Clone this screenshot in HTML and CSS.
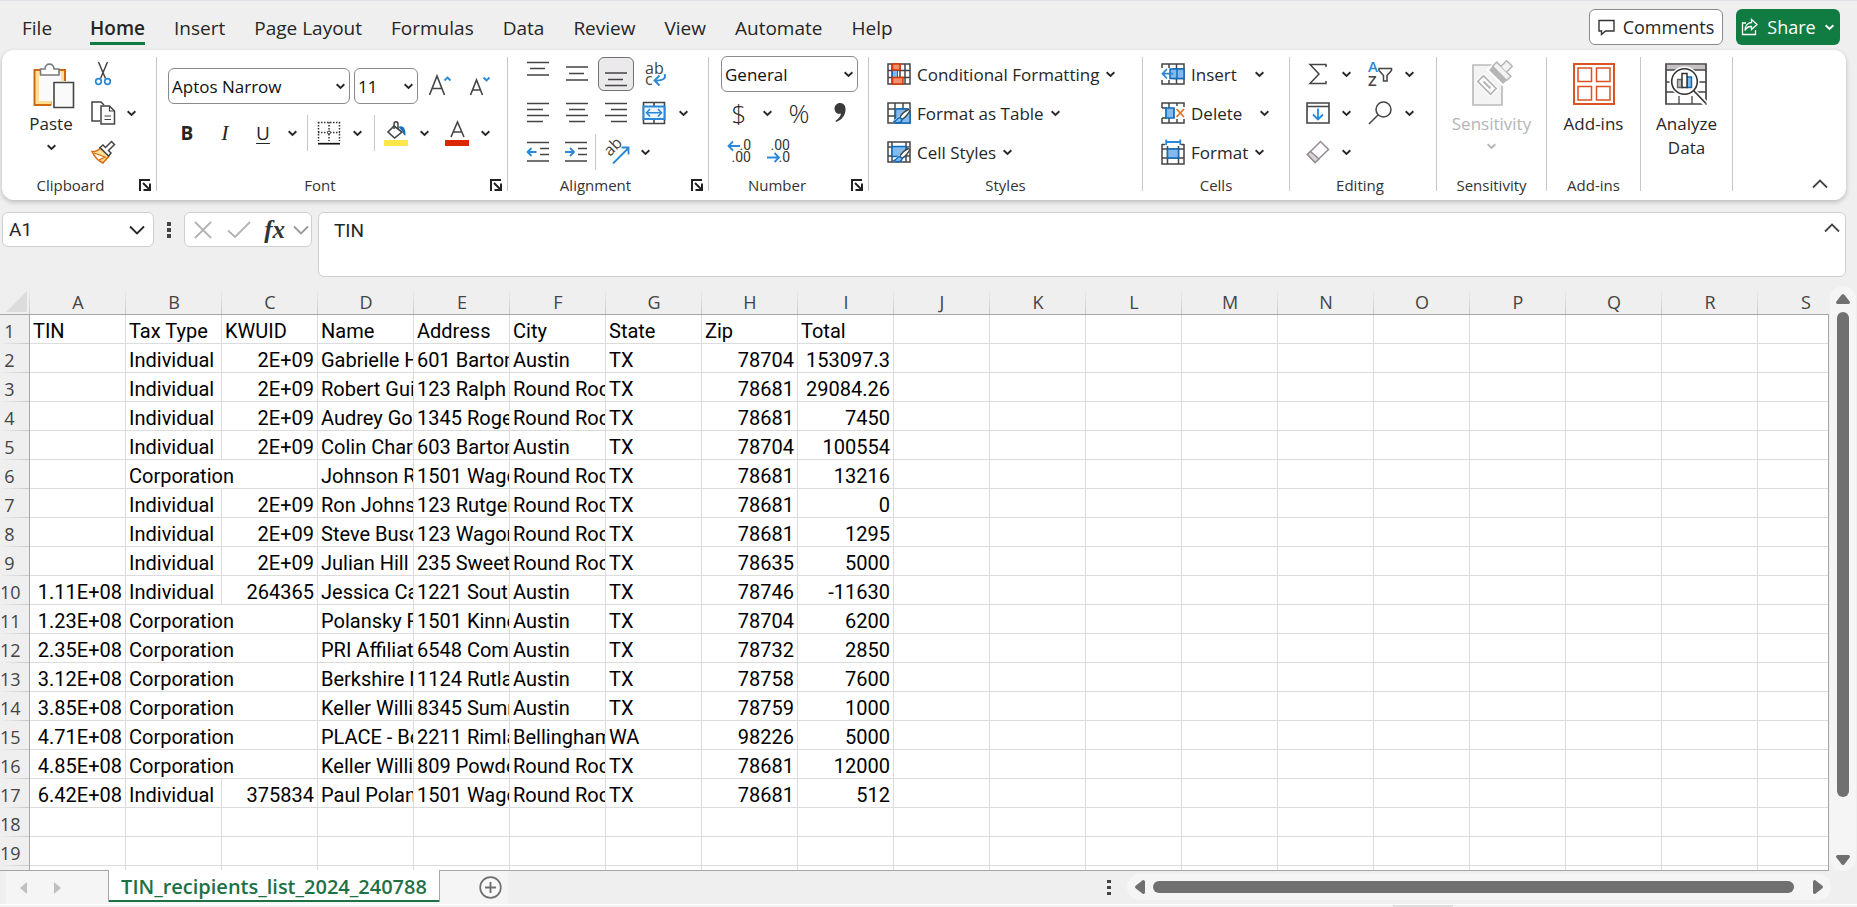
FILE: index.html
```html
<!DOCTYPE html>
<html lang="en">
<head>
<meta charset="utf-8">
<title>TIN_recipients_list_2024_240788</title>
<link rel="stylesheet" href="styles.css">
</head>
<body>
<svg class="defs" aria-hidden="true">
  <symbol id="chev" viewBox="0 0 10 10"><path d="M1.5 3 L5 6.300 L8.500 3" fill="none" stroke="currentColor" stroke-width="1.700"/></symbol>
  <symbol id="chev-l" viewBox="0 0 16 10"><path d="M1 1.500 L8 8.500 L15 1.500" fill="none" stroke="currentColor" stroke-width="1.8"/></symbol>
  <symbol id="launch" viewBox="0 0 12 12"><path d="M1 12 V1 H11 M4 4 L10 10 M11 4.500 V11 H4.500" fill="none" stroke="#222" stroke-width="2"/></symbol>
  <symbol id="brush" viewBox="0 0 18 16">
    <path d="M4 10 L16 0 L18 2 L11 10 L8 14 L3 15 L0 13 Z" fill="#fff"/>
    <path d="M16.500 1 C12 3 8 7 7 9.500 L9 11.500 C12 10 16 5 17.500 1.500" fill="#fff" stroke="#444" stroke-width="1.4"/>
    <path d="M7 9.500 C4.500 9.500 4.500 12 1 13.500 C4 15.500 9 15 9 11.500 Z" fill="#83b9eb" stroke="#0f6cbd" stroke-width="1.4"/>
  </symbol>
</svg>

<header class="top">
  <nav class="tabs" aria-label="Ribbon tabs">
    <button class="tab">File</button>
    <button class="tab active">Home</button>
    <button class="tab">Insert</button>
    <button class="tab">Page Layout</button>
    <button class="tab">Formulas</button>
    <button class="tab">Data</button>
    <button class="tab">Review</button>
    <button class="tab">View</button>
    <button class="tab">Automate</button>
    <button class="tab">Help</button>
  </nav>
  <div class="actions">
    <button class="comments">
      <svg width="17" height="17" viewBox="0 0 17 17"><path d="M1 1.500 H16 V12 H7.500 L3.500 15.500 V12 H1 Z" fill="none" stroke="#333" stroke-width="1.4"/></svg>
      Comments
    </button>
    <button class="share">
      <svg width="18" height="18" viewBox="0 0 18 18"><path d="M5 5 H1.500 V16.500 H14.500 V12 M10.500 1.500 L16 6.500 L10.500 11.500 V8.500 C7.500 8.300 5.500 9.500 4 12.500 C4 7.500 7 4.700 10.500 4.500 Z" fill="none" stroke="#fff" stroke-width="1.3"/></svg>
      Share
      <svg class="c10"><use href="#chev"/></svg>
    </button>
  </div>
</header>

<section class="ribbon" aria-label="Home ribbon">
  <div class="group g-clipboard">
    <div class="body cols">
      <button class="tall paste">
        <svg width="42" height="46" viewBox="0 0 42 46">
          <path d="M1.500 7 H32 V20 H19 V42 H1.500 Z" fill="#ffdf91" stroke="#d06a10" stroke-width="2"/>
          <path d="M6 10 H28 V18 H19 V38 H6 Z" fill="#fafafa"/>
          <path d="M7.500 12 V6 H12 C12 -0.500 21 -0.500 21 6 H26 V12 Z" fill="#fff" stroke="#7a7a7a" stroke-width="1.6"/>
          <path d="M18.500 18 H42 V46 H18.500 Z" fill="#fff"/>
          <path d="M21 19.500 H40.500 V44.500 H21 Z" fill="#fafafa" stroke="#444" stroke-width="1.6"/>
        </svg>
        <span>Paste</span>
        <svg class="c10"><use href="#chev"/></svg>
      </button>
      <div class="rows">
        <div class="row">
          <button class="b42" aria-label="Cut"><svg width="18" height="26" viewBox="0 0 18 26"><path d="M4.500 1 L11.500 17.500 M13.500 1 L6.500 17.500" stroke="#444" stroke-width="1.5" fill="none"/><g fill="#fff" stroke="#2b88d8" stroke-width="1.7"><circle cx="4.500" cy="20.500" r="2.800"/><circle cx="13.500" cy="20.500" r="2.800"/></g></svg></button>
        </div>
        <div class="row">
          <button class="b42" aria-label="Copy"><svg width="25" height="24" viewBox="0 0 25 24"><path d="M9 20 H1 V1 H10 L13 4" fill="none" stroke="#444" stroke-width="1.5"/><path d="M10 5 H18.500 L23.500 10 V23 H10 Z" fill="#fafafa" stroke="#444" stroke-width="1.500"/><path d="M18.500 5 V10 H23.500 M13.500 15 H20 M13.500 18.500 H20" fill="none" stroke="#444" stroke-width="1.2"/></svg></button>
          <button class="b14" aria-label="Copy options"><svg class="c10"><use href="#chev"/></svg></button>
        </div>
        <div class="row">
          <button class="b42" aria-label="Format Painter"><svg width="25" height="24" viewBox="0 0 25 24"><path d="M1 11.500 C5 11.500 8 10 9 8 L18 16 C16 19 13.500 20.500 12 23 C7.500 21 3 16 1 11.500 Z" fill="#ffdf91" stroke="#d8680c" stroke-width="1.5"/><path d="M3 13 L14 17 L8 20" fill="#fff" stroke="#d8680c" stroke-width="1.300"/><path d="M9 7.500 L12 5 L14.500 7.500 L20.500 1.500 L23.500 4.500 L17.500 10.500 L20 13 L17.500 16 Z" fill="#fff" stroke="#444" stroke-width="1.500"/></svg></button>
        </div>
      </div>
    </div>
    <div class="label"><span>Clipboard</span><button aria-label="Clipboard settings"><svg><use href="#launch"/></svg></button></div>
  </div>

  <div class="group g-font">
    <div class="body rows">
      <div class="row">
        <label class="pick font-name"><select aria-label="Font"><option>Aptos Narrow</option></select><svg class="c10"><use href="#chev"/></svg></label>
        <label class="pick font-size"><select aria-label="Font size"><option>11</option></select><svg class="c10"><use href="#chev"/></svg></label>
        <button class="b44" aria-label="Increase font size"><svg width="24" height="24" viewBox="0 0 24 24"><path d="M1.500 21 L9 2 L16.500 21 M4 14.500 H14" fill="none" stroke="#444" stroke-width="1.600"/><path d="M16.500 6.500 L19.500 3.500 L22.500 6.500" fill="none" stroke="#2b88d8" stroke-width="1.800"/></svg></button>
        <button class="b36" aria-label="Decrease font size"><svg width="22" height="24" viewBox="0 0 22 24"><path d="M1.500 21 L7.500 6 L13.500 21 M3.500 16 H11.500" fill="none" stroke="#444" stroke-width="1.600"/><path d="M14.500 3.500 L17.500 6.500 L20.500 3.500" fill="none" stroke="#2b88d8" stroke-width="1.800"/></svg></button>
      </div>
      <div class="row">
        <button class="b38 bold">B</button>
        <button class="b38 italic">I</button>
        <button class="b38 under">U</button>
        <button class="b20" aria-label="Underline options"><svg class="c10"><use href="#chev"/></svg></button>
        <i class="sep"></i>
        <button class="b32" aria-label="Borders"><svg width="24" height="24" viewBox="0 0 24 24"><path d="M1 1.500 H23 M1 11.500 H23" fill="none" stroke="#333" stroke-width="1.500" stroke-dasharray="1.500 1.500"/><path d="M1.500 1 V20 M12 1 V20 M22.500 1 V20" fill="none" stroke="#333" stroke-width="1.500" stroke-dasharray="1.500 1.500"/><circle cx="12" cy="11.500" r="1.500" fill="#fff" stroke="#333"/><path d="M1 22.700 H23" stroke="#111" stroke-width="1.700"/></svg></button>
        <button class="b24" aria-label="Border options"><svg class="c10"><use href="#chev"/></svg></button>
        <i class="sep"></i>
        <button class="b32" aria-label="Fill color"><svg width="24" height="26" viewBox="0 0 24 26"><path d="M10 6 L18 12 L10.500 18 L4 12 Z" fill="#fff" stroke="#444" stroke-width="1.600"/><path d="M10 9 V4 C10 1 14 1 14 4 V9" fill="none" stroke="#444" stroke-width="1.500"/><path d="M14.500 7 C18 5 22 7 21.500 15.500 C19 15 19 12.500 18.500 11.500 Z" fill="#1a6fbf"/><path d="M0 20 H24 V26 H0 Z" fill="#ffe74a"/></svg></button>
        <button class="b24" aria-label="Fill options"><svg class="c10"><use href="#chev"/></svg></button>
        <button class="b42" aria-label="Font color"><svg width="24" height="26" viewBox="0 0 24 26"><path d="M6 17 L12.500 2 L19 17 M8.300 12 H16.700" fill="none" stroke="#444" stroke-width="1.600"/><path d="M0 20 H24 V26 H0 Z" fill="#dc2600"/></svg></button>
        <button class="b14" aria-label="Font color options"><svg class="c10"><use href="#chev"/></svg></button>
      </div>
    </div>
    <div class="label"><span>Font</span><button aria-label="Font settings"><svg><use href="#launch"/></svg></button></div>
  </div>

  <div class="group g-align">
    <div class="body rows">
      <div class="row">
        <button class="b39" aria-label="Top align"><svg class="i24"><path d="M1 0.500 H23 M4 6.500 H19 M1 13 H23" class="ln"/></svg></button>
        <button class="b39" aria-label="Middle align"><svg class="i24"><path d="M1 5 H23 M4 11.500 H19 M1 18 H23" class="ln"/></svg></button>
        <button class="b39 on" aria-label="Bottom align"><svg class="i24"><path d="M1 11 H23 M4 17.500 H19 M1 23.500 H23" class="ln"/></svg></button>
        <button class="b42" aria-label="Wrap text"><svg width="22" height="26" viewBox="0 0 22 26"><text x="0" y="13" class="glyph">ab</text><text x="0" y="24" class="glyph">c</text><path d="M19.500 13 C21.500 18 17 20 10 19.500 M14.500 14.500 L9.500 19.500 L14.500 24.500" fill="none" stroke="#2b88d8" stroke-width="1.900"/></svg></button>
      </div>
      <div class="row">
        <button class="b39" aria-label="Align left"><svg class="i24"><path d="M1 2.500 H23 M1 8.500 H17 M1 14.500 H23 M1 20.500 H17" class="ln"/></svg></button>
        <button class="b39" aria-label="Center"><svg class="i24"><path d="M1 2.500 H23 M4 8.500 H20 M1 14.500 H23 M4 20.500 H20" class="ln"/></svg></button>
        <button class="b39" aria-label="Align right"><svg class="i24"><path d="M1 2.500 H23 M7 8.500 H23 M1 14.500 H23 M7 20.500 H23" class="ln"/></svg></button>
        <button class="b38" aria-label="Merge and center"><svg class="i24"><path d="M1.500 1.500 H22.500 V22.500 H1.500 Z M12 1.500 V22.500" fill="#fff" stroke="#444" stroke-width="1.600"/><path d="M1.500 5.500 H22.500 V18 H1.500 Z" fill="#eef6fd" stroke="#2b88d8" stroke-width="2"/><path d="M4.500 11.700 H19.500 M8 8 L4.500 11.700 L8 15.500 M16 8 L19.500 11.700 L16 15.500" fill="none" stroke="#2b88d8" stroke-width="1.600"/></svg></button>
        <button class="b20" aria-label="Merge options"><svg class="c10"><use href="#chev"/></svg></button>
      </div>
      <div class="row">
        <button class="b39" aria-label="Decrease indent"><svg class="i24"><path d="M1 2.500 H23 M14 8.500 H23 M14 14.500 H23 M1 21 H23" class="ln"/><path d="M1.500 12 H10.500 M5.500 8 L1.500 12 L5.500 16" class="bl"/></svg></button>
        <button class="b38" aria-label="Increase indent"><svg class="i24"><path d="M1 2.500 H23 M14 8.500 H23 M14 14.500 H23 M1 21 H23" class="ln"/><path d="M1 12 H10 M6 8 L10 12 L6 16" class="bl"/></svg></button>
        <i class="sep tight"></i>
        <button class="b42" aria-label="Orientation"><svg width="26" height="26" viewBox="0 0 26 26"><text x="0" y="0" class="glyph" transform="translate(6 18) rotate(-45)">ab</text><path d="M9 24.500 L24 9.500 M17.500 8.500 H24.500 V15.500" fill="none" stroke="#2b88d8" stroke-width="1.800"/></svg></button>
        <button class="b14" aria-label="Orientation options"><svg class="c10"><use href="#chev"/></svg></button>
      </div>
    </div>
    <div class="label"><span>Alignment</span><button aria-label="Alignment settings"><svg><use href="#launch"/></svg></button></div>
  </div>

  <div class="group g-number">
    <div class="body rows">
      <div class="row">
        <label class="pick num-format"><select aria-label="Number format"><option>General</option></select><svg class="c10"><use href="#chev"/></svg></label>
      </div>
      <div class="row">
        <button class="b36 big">$</button>
        <button class="b20" aria-label="Currency options"><svg class="c10"><use href="#chev"/></svg></button>
        <button class="b44 big">%</button>
        <button class="b38" aria-label="Comma style"><svg width="14" height="22" viewBox="0 0 14 22"><path d="M7 1 C11 1 13 4 12.500 8.500 C12 14 8 18.500 3 20 L2.500 18.800 C5.500 17 7.500 14.500 8 11.500 C4.500 12.800 1.500 10 1.500 6.500 C1.500 3.500 4 1 7 1 Z" fill="#3a3a3a"/></svg></button>
      </div>
      <div class="row">
        <button class="b36" aria-label="Increase decimal"><svg width="24" height="26" viewBox="0 0 24 26"><text x="24" y="11" class="digits">.0</text><text x="24" y="23" class="digits">.00</text><path d="M1.500 7 H13 M6 2.500 L1.500 7 L6 11.500" class="bl"/></svg></button>
        <button class="b42" aria-label="Decrease decimal"><svg width="24" height="26" viewBox="0 0 24 26"><text x="24" y="11" class="digits">.00</text><text x="24" y="23" class="digits">.0</text><path d="M1 18.500 H13 M8.500 14 L13 18.500 L8.500 23" class="bl"/></svg></button>
      </div>
    </div>
    <div class="label"><span>Number</span><button aria-label="Number settings"><svg><use href="#launch"/></svg></button></div>
  </div>

  <div class="group g-styles">
    <div class="body rows">
      <div class="row"><button class="cmd">
        <svg width="24" height="22" viewBox="0 0 24 22"><path d="M1 1 H23 V21 H1 Z M1 7.500 H23 M1 14.500 H23 M5 1 V21 M18 1 V21 M13 1 V21" fill="#fff" stroke="#444" stroke-width="1.500"/><path d="M5.500 7.500 H10.500 V14.500 H5.500 Z" fill="#83b9eb" stroke="#0f6cbd" stroke-width="1"/><path d="M5.500 1 H13 V7 H5.500 Z M5.500 14.500 H16 V21 H5.500 Z" fill="#f09070" stroke="#d83b01" stroke-width="1.500"/></svg>
        Conditional Formatting<svg class="c10"><use href="#chev"/></svg></button></div>
      <div class="row"><button class="cmd">
        <svg width="24" height="22" viewBox="0 0 24 22"><path d="M1 1 H23 V21 H1 Z M1 7 H23 M1 14 H23 M8 1 V21 M16 1 V21" fill="#fff" stroke="#444" stroke-width="1.500"/><path d="M8.500 7 H23 V21 H8.500 Z" fill="#83b9eb" stroke="#0f6cbd" stroke-width="1.500"/><use href="#brush" x="6" y="6" width="18" height="16"/></svg>
        Format as Table<svg class="c10"><use href="#chev"/></svg></button></div>
      <div class="row"><button class="cmd">
        <svg width="24" height="22" viewBox="0 0 24 22"><path d="M1 1 H23 V21 H1 Z M1 6 H23 M1 15 H23 M5 1 V21 M19 1 V21" fill="#fff" stroke="#444" stroke-width="1.500"/><path d="M5 5.500 H19 V15.500 H5 Z" fill="#83b9eb" stroke="#0f6cbd" stroke-width="1.500"/><use href="#brush" x="6" y="6" width="18" height="16"/></svg>
        Cell Styles<svg class="c10"><use href="#chev"/></svg></button></div>
    </div>
    <div class="label"><span>Styles</span></div>
  </div>

  <div class="group g-cells">
    <div class="body rows">
      <div class="row"><button class="cmd split">
        <svg width="24" height="22" viewBox="0 0 24 22"><path d="M1 1 H23 V21 H1 Z M1 6 H23 M1 15.500 H23 M8 1 V21 M15.500 1 V21" fill="#fff" stroke="#444" stroke-width="1.500"/><path d="M0 5 H12 V17 H0 Z" fill="#fff"/><path d="M9 6 H23 V15.500 H9 Z" fill="#83b9eb" stroke="#0f6cbd" stroke-width="1.500"/><path d="M16 6 V15" stroke="#0f6cbd" stroke-width="1.500"/><path d="M1.500 10.700 H12 M6 6 L1.500 10.700 L6 15.500" class="bl"/></svg>
        Insert<svg class="c10"><use href="#chev"/></svg></button></div>
      <div class="row"><button class="cmd split">
        <svg width="24" height="22" viewBox="0 0 24 22"><path d="M1 6 V1 H23 V5 M1 16 V21 H23 V17 M1 6 H6 M1 16 H6 M8 1 V6 M16 1 V4 M8 16 V21 M16 17 V21" fill="none" stroke="#444" stroke-width="1.500"/><path d="M5 6 H13 V16 H5 Z" fill="#83b9eb" stroke="#0f6cbd" stroke-width="1.700"/><path d="M15.500 7 L23 15 M23 7 L15.500 15" stroke="#e07020" stroke-width="1.700"/></svg>
        Delete<svg class="c10"><use href="#chev"/></svg></button></div>
      <div class="row"><button class="cmd">
        <svg width="24" height="26" viewBox="0 0 24 26"><path d="M1 5 V25 H23 V5 M1 10 H23 M1 19 H23 M6.500 7 V25 M17.500 7 V25 M1 5.500 H4 M20 5.500 H23" fill="none" stroke="#444" stroke-width="1.500"/><path d="M6.500 10 H17.500 V19 H6.500 Z" fill="#83b9eb" stroke="#0f6cbd" stroke-width="1.500"/><path d="M5 3 H19.500 M5.200 0.500 V6 M19.300 0.500 V6" class="bl"/></svg>
        Format<svg class="c10"><use href="#chev"/></svg></button></div>
    </div>
    <div class="label"><span>Cells</span></div>
  </div>

  <div class="group g-editing">
    <div class="body rows">
      <div class="row">
        <button class="b32" aria-label="AutoSum"><svg width="20" height="22" viewBox="0 0 20 22"><path d="M18 4 V1.500 H2 L11 11 L2 20.500 H18 V18" fill="none" stroke="#444" stroke-width="1.500"/></svg></button>
        <button class="b24" aria-label="AutoSum options"><svg class="c10"><use href="#chev"/></svg></button>
        <button class="b44" aria-label="Sort and filter"><svg width="26" height="26" viewBox="0 0 26 26"><text x="1" y="11" class="az a">A</text><text x="1" y="25" class="az">Z</text><path d="M12 7.500 H24.500 V9.500 L20 14.500 V20 H16.500 V14.500 L12 9.500 Z" fill="none" stroke="#444" stroke-width="1.500"/></svg></button>
        <button class="b14" aria-label="Sort options"><svg class="c10"><use href="#chev"/></svg></button>
      </div>
      <div class="row">
        <button class="b32" aria-label="Fill"><svg width="24" height="22" viewBox="0 0 24 22"><path d="M1 1 H23 V21 H1 Z M1 4.500 H23" fill="#fff" stroke="#444" stroke-width="1.600"/><path d="M12 6.500 V17 M7 12.500 L12 17.500 L17 12.500" class="bl"/></svg></button>
        <button class="b24" aria-label="Fill options"><svg class="c10"><use href="#chev"/></svg></button>
        <button class="b44" aria-label="Find and select"><svg width="24" height="24" viewBox="0 0 24 24"><circle cx="15.500" cy="8.500" r="7.500" fill="#fff" stroke="#444" stroke-width="1.500"/><path d="M10.200 13.800 L1 23" stroke="#444" stroke-width="1.500"/></svg></button>
        <button class="b14" aria-label="Find options"><svg class="c10"><use href="#chev"/></svg></button>
      </div>
      <div class="row">
        <button class="b32" aria-label="Clear"><svg width="24" height="24" viewBox="0 0 24 24"><path d="M1.500 14.500 L14.500 1.500 L22.500 9.500 L9 22.500 Z" fill="#fff" stroke="#968a96" stroke-width="1.500"/><path d="M1.500 14.500 L4.500 11.500 L13 19 L9 22.500 Z" fill="#d8d4d8" stroke="#968a96" stroke-width="1.400"/></svg></button>
        <button class="b24" aria-label="Clear options"><svg class="c10"><use href="#chev"/></svg></button>
      </div>
    </div>
    <div class="label"><span>Editing</span></div>
  </div>

  <div class="group g-sens">
    <div class="body cols center">
      <button class="tall off" disabled>
        <svg width="42" height="46" viewBox="0 0 42 46"><path d="M2 5 H31 V45 H2 Z" fill="#f3f3f3" stroke="#bbb" stroke-width="1.700"/>
          <g transform="rotate(45 16 25)"><path d="M5 19 H27 V31 H5 Z" fill="#fff"/><path d="M7 21 H25 V29 H7 Z" fill="#fff" stroke="#b5b5b5" stroke-width="1.700"/><path d="M11 25 H21" stroke="#b5b5b5" stroke-width="2.200"/></g>
          <g transform="rotate(45 30 12)"><path d="M18 5 H42 V21 H18 Z" fill="#fff"/><path d="M20 13 H40 V19 H20 Z" fill="#b5b5b5"/><path d="M20 8 H40 V14 H20 Z" fill="#f3f3f3" stroke="#b5b5b5" stroke-width="1.500"/><path d="M26 8 V0 H34 V8" fill="#f3f3f3" stroke="#b5b5b5" stroke-width="1.500"/></g></svg>
        <span>Sensitivity</span>
        <svg class="c10"><use href="#chev"/></svg>
      </button>
    </div>
    <div class="label"><span>Sensitivity</span></div>
  </div>

  <div class="group g-addins">
    <div class="body cols center">
      <button class="tall">
        <svg width="42" height="46" viewBox="0 0 42 46"><path d="M1 4 H41 V44 H1 Z" fill="#fff" stroke="#dd5222" stroke-width="2"/><path d="M5 8 H18.500 V21.500 H5 Z M23.500 8 H37 V21.500 H23.500 Z M5 26.500 H18.500 V40 H5 Z M23.500 26.500 H37 V40 H23.500 Z" fill="#fff" stroke="#dd5222" stroke-width="1.500"/></svg>
        <span>Add-ins</span>
      </button>
    </div>
    <div class="label"><span>Add-ins</span></div>
  </div>

  <div class="group g-analyze">
    <div class="body cols center">
      <button class="tall">
        <svg width="42" height="46" viewBox="0 0 42 46"><path d="M1 4 H41 V44 H1 Z" fill="#fff" stroke="#444" stroke-width="1.700"/><path d="M2 5 H40 V9.500 H2 Z" fill="#c8c2c8"/><path d="M1 10 H41 M1 22 H6 M34 22 H41 M1 32 H41 M14 36 V44 M27 36 V44" stroke="#444" stroke-width="1.300"/><circle cx="19.500" cy="21.500" r="15" fill="#fff"/><path d="M27 30 L41 44" stroke="#fff" stroke-width="6"/><circle cx="19.500" cy="21.500" r="12.800" fill="#fff" stroke="#333" stroke-width="1.600"/><path d="M28.500 30.500 L41 43.500" stroke="#333" stroke-width="1.700"/><path d="M12.500 19.500 H17 V27.500 H12.500 Z" fill="#bbb" stroke="#666" stroke-width="1.300"/><path d="M22 17 H26.500 V27.500 H22 Z" fill="#83b9eb" stroke="#0f6cbd" stroke-width="1.500"/><path d="M17 13.500 H22 V27.500 H17 Z" fill="#fff" stroke="#333" stroke-width="1.500"/></svg>
        <span>Analyze<br>Data</span>
      </button>
    </div>
  </div>
  <button class="collapse" aria-label="Collapse ribbon"><svg class="up"><use href="#chev-l"/></svg></button>
</section>

<section class="formula" aria-label="Formula bar">
  <div class="box name"><input type="text" value="A1" aria-label="Name box"><svg class="big-chev"><use href="#chev-l"/></svg></div>
  <svg class="vdots" viewBox="0 0 4 16"><path d="M0 0 H4 V4 H0 Z M0 6 H4 V10 H0 Z M0 12 H4 V16 H0 Z" fill="#444"/></svg>
  <div class="box fx">
    <button aria-label="Cancel"><svg width="18" height="18" viewBox="0 0 18 18"><path d="M1 1 L17 17 M17 1 L1 17" stroke="#b3b3b3" stroke-width="1.800"/></svg></button>
    <button class="enter" aria-label="Enter"><svg width="24" height="18" viewBox="0 0 24 18"><path d="M1 9.500 L8 16 L23 1" fill="none" stroke="#b3b3b3" stroke-width="1.800"/></svg></button>
    <button class="fn" aria-label="Insert function">fx</button>
    <button class="grey" aria-label="Function options"><svg class="big-chev"><use href="#chev-l"/></svg></button>
  </div>
  <div class="box entry"><textarea aria-label="Formula">TIN</textarea><button aria-label="Collapse formula bar"><svg class="up"><use href="#chev-l"/></svg></button></div>
</section>

<main class="work">
  <div class="sheet"><table id="grid"></table></div>
  <div class="vbar" aria-hidden="true">
    <svg width="14" height="10" viewBox="0 0 14 10"><path d="M7 0 Q8 0 9 1.500 L14 8 Q14 10 12.500 10 H1.500 Q0 10 0 8 L5 1.500 Q6 0 7 0 Z" fill="#707070"/></svg>
    <i class="vthumb"></i>
    <svg width="14" height="10" viewBox="0 0 14 10"><path d="M7 10 Q8 10 9 8.500 L14 2 Q14 0 12.500 0 H1.500 Q0 0 0 2 L5 8.500 Q6 10 7 10 Z" fill="#707070"/></svg>
  </div>
</main>

<footer class="foot">
  <div class="sheets">
    <button class="arrow" aria-label="Previous sheet"><svg width="7" height="12" viewBox="0 0 7 12"><path d="M7 0 V12 L0 6 Z" fill="#c2bec2"/></svg></button>
    <button class="arrow" aria-label="Next sheet"><svg width="7" height="12" viewBox="0 0 7 12"><path d="M0 0 V12 L7 6 Z" fill="#c2bec2"/></svg></button>
    <button class="sheet-tab">TIN_recipients_list_2024_240788</button>
    <button class="add" aria-label="New sheet"><svg width="23" height="23" viewBox="0 0 23 23"><circle cx="11.500" cy="11.500" r="10.300" fill="#fafafa" stroke="#707070" stroke-width="1.700"/><path d="M6 11.500 H17 M11.500 6 V17" stroke="#707070" stroke-width="1.900"/></svg></button>
  </div>
  <svg class="vdots" viewBox="0 0 4 16"><path d="M0 0 H4 V3 H0 Z M0 6 H4 V9 H0 Z M0 12 H4 V15 H0 Z" fill="#444"/></svg>
  <div class="hbar" aria-hidden="true">
    <svg width="10" height="14" viewBox="0 0 10 14"><path d="M0 7 Q0 6 1.500 5 L8 0 Q10 0 10 1.500 V12.500 Q10 14 8 14 L1.500 9 Q0 8 0 7 Z" fill="#707070"/></svg>
    <i class="hthumb"></i>
    <svg width="10" height="14" viewBox="0 0 10 14"><path d="M10 7 Q10 6 8.500 5 L2 0 Q0 0 0 1.500 V12.500 Q0 14 2 14 L8.500 9 Q10 8 10 7 Z" fill="#707070"/></svg>
  </div>
</footer>
<div class="status"><i></i></div>
<script src="sheet.js"></script>
</body>
</html>
```
FILE: styles.css
```css
* { box-sizing: border-box; }
html, body { height: 100%; }
body {
  margin: 0;
  display: flex;
  flex-direction: column;
  overflow: hidden;
  background: #efefef;
  border-top: 1px solid #dde1e6;
  color: #262626;
  font-family: "Open Sans", "Noto Sans", sans-serif;
  font-size: 17px;
}
button, input, select, textarea { font: inherit; color: inherit; background: none; border: 0; margin: 0; padding: 0; outline: 0; }
button { display: flex; align-items: center; justify-content: center; flex: none; }
svg { display: block; flex: none; overflow: visible; }
.defs { position: absolute; width: 0; height: 0; }
.c10 { width: 11px; height: 11px; }
.i24 { width: 24px; height: 24px; }
.ln { fill: none; stroke: #444; stroke-width: 1.6px; }
.bl { fill: none; stroke: #2b88d8; stroke-width: 1.8px; }
.glyph { font-size: 16px; fill: #444; }
.digits { font-family: Roboto, sans-serif; font-size: 14px; fill: #333; text-anchor: end; }
.az { font-size: 15px; font-weight: 600; fill: #444; }
.az.a { fill: #2b88d8; }

/* tab strip */
.top { height: 49px; display: flex; justify-content: space-between; flex: none; }
.tabs { display: flex; gap: 29px; padding: 12px 0 0 22px; font-size: 19px; }
.tab { height: 32px; padding-top: 1px; line-height: 30px; border-bottom: 3px solid transparent; }
.tab.active { margin-left: 9px; font-weight: 600; border-color: #107c41; }
.actions { display: flex; gap: 13px; padding: 8px 17px 0 0; font-size: 18px; }
.comments, .share { height: 36px; border-radius: 6px; gap: 8px; }
.comments { width: 134px; background: #fff; border: 1px solid #8a8a8a; }
.share { width: 104px; background: #107c41; color: #fff; }

/* ribbon */
.ribbon {
  height: 150px;
  flex: none;
  display: flex;
  margin: 0 11px 0 2px;
  padding: 7px 0 9px;
  background: #fff;
  border-radius: 12px;
  box-shadow: 0 2px 5px rgba(0, 0, 0, .22);
}
.group { display: flex; flex-direction: column; border-right: 1px solid #c8c8c8; flex: none; }
.g-clipboard { width: 155px; padding-left: 18px; }
.g-font { width: 351px; padding-left: 11px; }
.g-align { width: 201px; padding-left: 10px; }
.g-number { width: 160px; padding-left: 12px; }
.g-styles { width: 274px; padding-left: 18px; }
.g-cells { width: 147px; padding-left: 18px; }
.g-editing { width: 147px; padding-left: 12px; }
.g-sens { width: 110px; }
.g-addins { width: 94px; }
.g-analyze { width: 92px; }
.body { flex: 1; }
.cols { display: flex; align-items: flex-start; }
.center { justify-content: center; }
.rows { display: flex; flex-direction: column; gap: 5px; }
.row { display: flex; height: 34px; align-items: center; }
.row > button { height: 34px; }
.g-font .rows { padding-top: 11px; gap: 11px; }
.g-font .row { height: 36px; }
.label { display: flex; height: 12px; line-height: 12px; font-size: 15px; color: #333; }
.label span { flex: 1; text-align: center; }
.label svg { width: 12px; height: 12px; }
.label button { margin-right: 5px; }
.group .label { margin-left: -18px; }
.group.g-sens .label, .group.g-addins .label { margin-left: 0; }
.b14 { width: 14px; }
.b20 { width: 20px; }
.b24 { width: 24px; }
.b32 { width: 32px; }
.b36 { width: 36px; }
.b38 { width: 38px; }
.b39 { width: 39px; }
.b42 { width: 42px; }
.b44 { width: 44px; }
.on { background: #ebe9eb; border: 1px solid #707070; border-radius: 6px; width: 36px; margin: 0 1px 0 2px; }
.sep { width: 1px; height: 36px; margin: 0 5px; background: #c8c8c8; }
.sep.tight { margin: 0; }
.tall { flex-direction: column; padding-top: 3px; line-height: 24px; }
.tall span { padding-top: 6px; }
.tall .c10 { margin-top: 5px; }
.paste { width: 62px; }
.paste svg:first-child { margin: 3px 0 0 6px; }
.paste span { padding-top: 3px; }
.paste .c10 { margin-top: 6px; }
.off { color: #b5b5b5; }
.bold { font-weight: 700; font-size: 19px; }
.italic { font-family: "Liberation Serif", serif; font-style: italic; font-size: 22px; }
.under { text-decoration: underline; text-underline-offset: 3px; font-size: 19px; }
.big { font-size: 26px; font-weight: 300; }
.pick { position: relative; height: 36px; border: 1px solid #8a8a8a; border-radius: 6px; }
.pick select { width: 100%; height: 100%; padding-left: 3px; appearance: none; color: #111; }
.pick .c10 { position: absolute; right: 3px; top: 12px; }
.font-name { width: 182px; margin-right: 4px; }
.font-size { width: 64px; }
.num-format { width: 137px; }
.cmd { gap: 6px; }
.split .c10 { margin-left: 11px; }
.collapse { margin: auto 18px 0 auto; height: 14px; }
.up { width: 16px; height: 10px; transform: rotate(180deg); color: #444; }

/* formula bar */
.formula { display: flex; align-items: flex-start; padding: 12px 11px 9px 2px; flex: none; }
.box { display: flex; height: 35px; background: #fff; border: 1px solid #cfcfcf; border-radius: 6px; }
.big-chev { width: 16px; height: 10px; }
.name { width: 152px; align-items: center; padding: 0 8px 0 6px; }
.name input { flex: 1; min-width: 0; font-family: Roboto, sans-serif; font-size: 19px; }
.vdots { width: 4px; height: 16px; }
.formula .vdots { margin: 10px 13px 0; }
.fx { width: 128px; align-items: center; padding: 0 2px 0 9px; }
.enter { margin-left: 15px; }
.fn { margin: 0 8px 0 auto; font-family: "Liberation Serif", serif; font-style: italic; font-weight: 700; font-size: 25px; color: #333; }
.grey { color: #999; }
.entry { flex: 1; height: 65px; margin-left: 6px; align-items: flex-start; padding: 4px 5px 0 15px; }
.entry textarea { flex: 1; height: 56px; resize: none; font-family: Roboto, sans-serif; font-size: 19px; line-height: 28px; }
.entry button { padding-top: 6px; }

/* worksheet */
.work { flex: 1; min-height: 0; display: flex; }
.sheet { flex: 1; min-width: 0; position: relative; overflow: hidden; padding-top: 2px; border-bottom: 1px solid #a6a6a6; }
.sheet::after { content: ""; position: absolute; top: 28px; right: 0; bottom: 0; border-right: 1px solid #a6a6a6; }
#grid { table-layout: fixed; border-collapse: separate; border-spacing: 0; }
#grid .rowcol { width: 30px; }
#grid .datacol { width: 96px; }
#grid th { padding: 0; font-weight: 400; font-size: 18px; color: #444; }
#grid thead th {
  height: 27px;
  padding-top: 2px;
  line-height: 24px;
  border-bottom: 1px solid #a6a6a6;
  background: linear-gradient(to top, #c8c8c8, #efefef) right / 1px 100% no-repeat;
}
#grid thead th:first-child { padding-top: 0; }
#grid tbody th {
  padding: 2px 10px 0 0;
  line-height: 26px;
  border-right: 1px solid #a6a6a6;
  background: linear-gradient(to right, #efefef, #c8c8c8) bottom / 100% 1px no-repeat;
}
#grid td {
  height: 29px;
  padding: 4px 3px 0 3px;
  line-height: 24px;
  font-family: Roboto, sans-serif;
  font-size: 20px;
  color: #000;
  background: #fff;
  border-right: 1px solid #dcdcdc;
  border-bottom: 1px solid #dcdcdc;
  white-space: nowrap;
  overflow: hidden;
}
#grid .num { text-align: right; }
.corner { display: block; margin: 2px 3px 2px auto; width: 21px; height: 21px; }
.vbar {
  width: 26px;
  margin: 0 1px 0 1px;
  padding: 8px 0 6px;
  display: flex;
  flex-direction: column;
  align-items: center;
  background: #f5f5f5;
  border-radius: 13px;
}
.vbar svg:last-child { margin-top: auto; }
.vthumb { width: 12px; height: 85%; margin-top: 8px; border-radius: 6px; background: #707070; }

/* sheet tabs */
.foot { height: 33px; flex: none; display: flex; padding-right: 26px; }
.sheets { width: 502px; margin: 0 auto 0 6px; display: flex; background: #f5f5f5; }
.arrow { width: 34px; }
.arrow + .sheet-tab { margin-left: 34px; }
.sheet-tab {
  position: relative;
  width: 332px;
  height: 32px;
  margin-top: -1px;
  background: #fff;
  border: solid #a6a6a6;
  border-width: 0 1px;
  box-shadow: inset 0 -2px #1e7145;
  color: #1e7145;
  font-size: 20px;
  font-weight: 600;
}
.add { width: 100px; }
.foot .vdots { margin: 9px 16px 0; }
.hbar { flex: 0 1 704px; height: 26px; margin-top: 3px; padding: 0 8px; display: flex; align-items: center; background: #f5f5f5; border-radius: 13px; }
.hthumb { flex: 1; height: 12px; margin: 0 19px 0 8px; border-radius: 6px; background: #707070; }
.status { height: 3px; flex: none; background: #f3f3f3; border-top: 1px solid #fff; }
.status i { display: block; width: 60px; height: 2px; margin-left: 75%; background: #dedede; }
```
FILE: sheet.js
```js
const columns = 'ABCDEFGHIJKLMNOPQRS'.split('');
const I = 'Individual', C = 'Corporation', RR = 'Round Rock';
const rows = [
  ['TIN', 'Tax Type', 'KWUID', 'Name', 'Address', 'City', 'State', 'Zip', 'Total'],
  ['', I, '2E+09', 'Gabrielle H', '601 Barton', 'Austin', 'TX', '78704', '153097.3'],
  ['', I, '2E+09', 'Robert Gui', '123 Ralph', RR, 'TX', '78681', '29084.26'],
  ['', I, '2E+09', 'Audrey Goo', '1345 Roge', RR, 'TX', '78681', '7450'],
  ['', I, '2E+09', 'Colin Char', '603 Barton', 'Austin', 'TX', '78704', '100554'],
  ['', C, '', 'Johnson Re', '1501 Wago', RR, 'TX', '78681', '13216'],
  ['', I, '2E+09', 'Ron Johnso', '123 Rutger', RR, 'TX', '78681', '0'],
  ['', I, '2E+09', 'Steve Busc', '123 Wagon', RR, 'TX', '78681', '1295'],
  ['', I, '2E+09', 'Julian Hill', '235 Sweet', RR, 'TX', '78635', '5000'],
  ['1.11E+08', I, '264365', 'Jessica Ca', '1221 South', 'Austin', 'TX', '78746', '-11630'],
  ['1.23E+08', C, '', 'Polansky R', '1501 Kinne', 'Austin', 'TX', '78704', '6200'],
  ['2.35E+08', C, '', 'PRI Affiliate', '6548 Coma', 'Austin', 'TX', '78732', '2850'],
  ['3.12E+08', C, '', 'Berkshire N', '1124 Rutla', 'Austin', 'TX', '78758', '7600'],
  ['3.85E+08', C, '', 'Keller Willi', '8345 Summ', 'Austin', 'TX', '78759', '1000'],
  ['4.71E+08', C, '', 'PLACE - Be', '2211 Rimla', 'Bellingham', 'WA', '98226', '5000'],
  ['4.85E+08', C, '', 'Keller Willi', '809 Powde', RR, 'TX', '78681', '12000'],
  ['6.42E+08', I, '375834', 'Paul Polan', '1501 Wago', RR, 'TX', '78681', '512'],
  [], [], []
];
const numeric = new Set([0, 2, 7, 8]);

const corner = '<svg class="corner" viewBox="0 0 21 21"><path d="M21 0 V21 H0 Z" fill="#dcdcdc"/></svg>';
let html = '<colgroup><col class="rowcol">' + columns.map(() => '<col class="datacol">').join('') + '</colgroup>';
html += '<thead><tr><th>' + corner + '</th>' + columns.map(c => `<th scope="col">${c}</th>`).join('') + '</tr></thead><tbody>';
rows.forEach((row, r) => {
  html += `<tr><th scope="row">${r + 1}</th>`;
  for (let c = 0; c < columns.length; c++) {
    const spill = row[c] === C;
    const cls = r > 0 && numeric.has(c) ? ' class="num"' : '';
    html += `<td${cls}${spill ? ' colspan="2"' : ''}>${row[c] || ''}</td>`;
    if (spill) c++;
  }
  html += '</tr>';
});
const grid = document.getElementById('grid');
grid.innerHTML = html + '</tbody>';
grid.style.width = 30 + columns.length * 96 + 'px';
```
